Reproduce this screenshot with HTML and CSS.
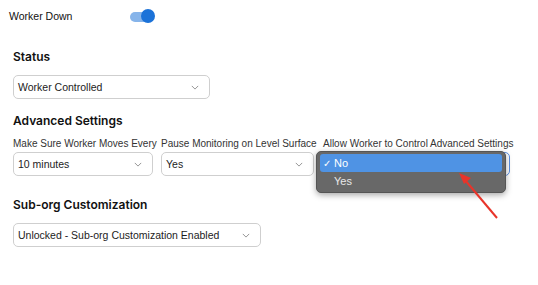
FILE: index.html
```html
<!DOCTYPE html>
<html>
<head>
<meta charset="utf-8">
<link rel="stylesheet" href="styles.css">
</head>
<body>
<div class="page">
  <div class="toprow">
    <span class="toplabel">Worker Down</span>
    <span class="toggle"><span class="track"></span><span class="knob"></span></span>
  </div>

  <section class="section s-status">
    <h3 class="heading">Status</h3>
    <div class="select w-status"><span>Worker Controlled</span><svg class="chev" viewBox="0 0 10 6"><path d="M1 1l4 4 4-4" fill="none" stroke="#888" stroke-width="1.1"/></svg></div>
  </section>

  <section class="section s-adv">
    <h3 class="heading">Advanced Settings</h3>
    <div class="fields">
      <div class="field f-a">
        <label class="label">Make Sure Worker Moves Every</label>
        <div class="select"><span>10 minutes</span><svg class="chev" viewBox="0 0 10 6"><path d="M1 1l4 4 4-4" fill="none" stroke="#888" stroke-width="1.1"/></svg></div>
      </div>
      <div class="field f-b">
        <label class="label">Pause Monitoring on Level Surface</label>
        <div class="select"><span>Yes</span><svg class="chev" viewBox="0 0 10 6"><path d="M1 1l4 4 4-4" fill="none" stroke="#888" stroke-width="1.1"/></svg></div>
      </div>
      <div class="field f-c">
        <label class="label">Allow Worker to Control Advanced Settings</label>
        <div class="select focused"></div>
        <div class="menu">
          <div class="opt sel"><span class="check">✓</span>No</div>
          <div class="opt"><span class="check"></span>Yes</div>
        </div>
      </div>
    </div>
  </section>

  <section class="section s-sub">
    <h3 class="heading">Sub-org Customization</h3>
    <div class="select w-sub"><span>Unlocked - Sub-org Customization Enabled</span><svg class="chev" viewBox="0 0 10 6"><path d="M1 1l4 4 4-4" fill="none" stroke="#888" stroke-width="1.1"/></svg></div>
  </section>

  <svg class="arrow" viewBox="0 0 538 285" width="538" height="285">
    <line x1="497" y1="218" x2="465" y2="180" stroke="#e8342a" stroke-width="2"/>
    <path d="M459 173 L471 178 L464 184 Z" fill="#e8342a"/>
  </svg>
</div>
</body>
</html>
```

FILE: styles.css
```css
* { box-sizing: border-box; }
html, body { margin: 0; padding: 0; background: #fff; }
body {
  font-family: "Liberation Sans", Arial, sans-serif;
  color: #1c1c1c;
  width: 538px;
  height: 285px;
  overflow: hidden;
}
.page { position: relative; padding: 0 0 0 9px; }
.toprow {
  display: flex;
  align-items: center;
  height: 32px;
}
.toplabel { font-size: 10.5px; width: 121px; color: #111; }
.toggle { position: relative; width: 25px; height: 15px; display: inline-block; }
.track {
  position: absolute; left: 0; top: 3px; width: 22px; height: 10px;
  background: #86b4ea; border-radius: 5px;
}
.knob {
  position: absolute; left: 11px; top: 0; width: 14px; height: 14px;
  background: #1b72d8; border-radius: 50%;
}
.section { padding-left: 4px; }
.heading {
  margin: 0;
  font-family: Inter, "Liberation Sans", Arial, sans-serif;
  font-size: 12px;
  font-weight: 600;
  color: #111;
}
.s-status { padding-top: 17px; }
.s-status .heading { margin-bottom: 11px; }
.s-adv { padding-top: 14px; }
.s-adv .heading { margin-bottom: 10px; }
.s-sub { padding-top: 21px; }
.s-sub .heading { margin-bottom: 11px; }
.select {
  display: flex;
  align-items: center;
  justify-content: space-between;
  height: 24px;
  border: 1px solid #cfcfcf;
  border-radius: 5px;
  padding: 0 10px 0 4px;
  font-size: 10.5px;
  color: #1c1c1c;
  background: #fff;
  white-space: nowrap;
}
.chev { width: 8px; height: 5px; flex: none; }
.w-status { width: 197px; }
.w-sub { width: 248px; }
.focused { border-color: #5b8fe0; }
.fields { display: flex; }
.field { display: flex; flex-direction: column; position: relative; }
.f-a { width: 140px; }
.f-b { width: 153px; margin-left: 8px; }
.f-c { width: 192px; margin-left: 4px; }
.f-c .label { padding-left: 5px; }
.label { font-size: 10px; color: #333; margin-bottom: 2px; white-space: nowrap; line-height: 12px; }
.menu {
  position: absolute;
  left: -2px;
  top: 13px;
  width: 190px;
  height: 42px;
  background: #686868;
  border: 1px solid #555;
  border-radius: 5px;
  box-shadow: 0 2px 6px rgba(0,0,0,0.35);
  padding: 2px 3px;
}
.opt {
  height: 18px;
  display: flex;
  align-items: center;
  font-size: 11px;
  color: #e8e8e8;
  border-radius: 3px;
  padding-left: 3px;
}
.opt.sel { background: #4f93e4; color: #fff; }
.check { width: 11px; display: inline-block; font-size: 10px; }
.arrow { position: absolute; left: 0; top: 0; pointer-events: none; }
```
